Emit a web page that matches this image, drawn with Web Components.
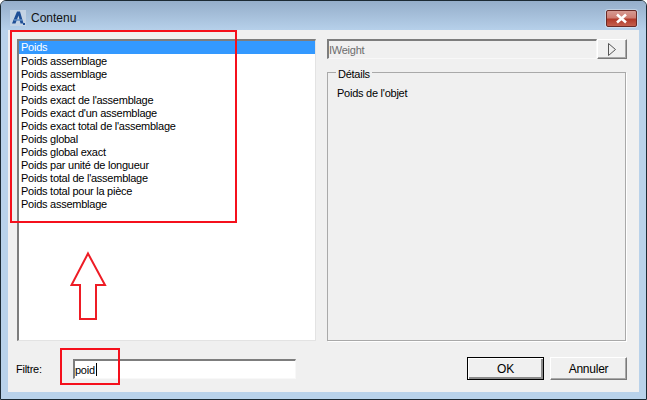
<!DOCTYPE html>
<html>
<head>
<meta charset="utf-8">
<title>Contenu</title>
<style>
  html, body { margin: 0; padding: 0; background: #fff; width: 647px; height: 400px; overflow: hidden; }
  body { font: 11px "Liberation Sans", Arial, sans-serif; letter-spacing: -.25px; color: #000; }
</style>
</head>
<body>
<win-dialog heading="Contenu">
  <dialog-body></dialog-body>
</win-dialog>
<script>
class WinDialog extends HTMLElement {
    constructor() {
        super();
        this.attachShadow({ mode: 'open' });
    }

    connectedCallback() {
        const heading = this.getAttribute('heading') || '';
        this.shadowRoot.innerHTML = `
      <style>
        :host {
          display: flex;
          flex-direction: column;
          box-sizing: border-box;
          width: 647px;
          height: 400px;
          border: 1px solid #1c2a33;
          border-radius: 6px 6px 0 0;
          background: #b9d2ea;
          overflow: hidden;
        }
        .bar {
          display: flex;
          align-items: center;
          height: 29px;
          flex: none;
          box-sizing: border-box;
          padding: 8px 9px 3px 9px;
          gap: 5px;
          background: linear-gradient(#95aeca, #b6d0ea);
        }
        .logo { width: 16px; height: 16px; flex: none; }
        .title { flex: 1; font-size: 12px; letter-spacing: 0; color: #111; }
        .close {
          box-sizing: border-box;
          width: 31px;
          height: 17px;
          border: 1px solid #6b2a26;
          border-radius: 2px;
          box-shadow: 0 0 0 1px rgba(255,255,255,.35);
          background: linear-gradient(#d69a92 0, #cf7d72 45%, #b13a2a 55%, #c4604e 100%);
          display: flex;
          align-items: center;
          justify-content: center;
        }
        .client { flex: 1; margin: 0 7px 7px 7px; background: #f0f0f0; display: flex; min-height: 0; }
      </style>
      <div class="bar">
        <svg class="logo" viewBox="0 0 16 16">
          <rect width="16" height="16" fill="#c4d3e4"/>
          <path d="M2 13.5 L7 1.5 H10 L13.5 13.5 H10.5 L8.5 5.5 L5.5 13.5 Z" fill="#1f4f96"/>
          <path d="M4 10 H12" stroke="#5f8cc4" stroke-width="1.5"/>
          <rect x="13" y="13" width="2" height="2" fill="#1f4f96"/>
        </svg>
        <span class="title">${heading}</span>
        <span class="close">
          <svg width="15" height="11" viewBox="0 0 15 11">
            <path d="M3 1.5 L12 9.5 M12 1.5 L3 9.5" stroke="#fff" stroke-width="2.6"/>
          </svg>
        </span>
      </div>
      <div class="client"><slot></slot></div>
    `;
    }
}

class ListPanel extends HTMLElement {
    constructor() {
        super();
        this.attachShadow({ mode: 'open' });
    }

    connectedCallback() {
        const rows = [
            'Poids', 'Poids assemblage', 'Poids assemblage', 'Poids exact',
            "Poids exact de l'assemblage", "Poids exact d'un assemblage",
            "Poids exact total de l'assemblage", 'Poids global', 'Poids global exact',
            'Poids par unité de longueur', "Poids total de l'assemblage",
            'Poids total pour la pièce', 'Poids assemblage'
        ];
        this.shadowRoot.innerHTML = `
      <style>
        :host {
          display: block;
          box-sizing: border-box;
          width: 299px;
          height: 302px;
          margin: -1px 0 0 -1px;
          background: #fff;
          border: 1px solid #e3e3e3;
          border-width: 2px 1px 1px 2px;
          border-color: #7d7d7d #e3e3e3 #e3e3e3 #7d7d7d;
        }
        div { height: 13px; line-height: 13px; padding-left: 2px; white-space: nowrap; color: #000; }
        .sel { background: #3399ff; color: #fff; margin-bottom: 1px; }
      </style>
      ${rows.map((r, i) => `<div class="${i === 0 ? 'sel' : ''}">${r}</div>`).join('')}
    `;
    }
}

class SunkenField extends HTMLElement {
    constructor() {
        super();
        this.attachShadow({ mode: 'open' });
    }

    connectedCallback() {
        this.shadowRoot.innerHTML = `
      <style>
        :host {
          display: flex;
          align-items: center;
          box-sizing: border-box;
          border: 2px solid;
          border-color: #7d7d7d #f8f8f8 #f8f8f8 #7d7d7d;
          border-right-width: 1px;
          border-bottom-width: 1px;
          white-space: nowrap;
        }
      </style>
      <slot></slot>
    `;
    }
}

class PushButton extends HTMLElement {
    constructor() {
        super();
        this.attachShadow({ mode: 'open' });
    }

    connectedCallback() {
        const isDefault = this.hasAttribute('default');
        this.shadowRoot.innerHTML = `
      <style>
        :host {
          display: flex;
          align-items: center;
          justify-content: center;
          box-sizing: border-box;
          background: #f0f0f0;
          font-size: 12px;
          color: #000;
          border: 1px solid;
          border-color: #fff #7a7a7a #7a7a7a #fff;
          box-shadow: inset -1px -1px 0 #a8a8a8;
          ${isDefault ? 'border-color: #000; box-shadow: inset 1px 1px 0 #fff, inset -2px -2px 0 #8a8a8a;' : ''}
        }
      </style>
      <slot></slot>
    `;
    }
}

class DialogBody extends HTMLElement {
    constructor() {
        super();
        this.attachShadow({ mode: 'open' });
    }

    connectedCallback() {
        this.shadowRoot.innerHTML = `
      <style>
        :host {
          display: block;
          position: relative;
          width: 631px;
          height: 362px;
          box-sizing: border-box;
          padding: 10px 13px 0 10px;
        }
        .top { display: flex; gap: 11px; height: 301px; }
        .right { flex: 1; display: flex; flex-direction: column; gap: 5px; }
        .path { display: flex; height: 20px; margin-top: -1px; }
        sunken-field.name { flex: 1; color: #6d6d6d; }
        .path push-button { width: 30px; margin-right: -1px; }
        fieldset {
          flex: 1;
          margin: 0;
          padding: 6px 9px;
          border: 1px solid #a9a9a9;
          box-shadow: 1px 1px 0 #fff;
          min-height: 0;
        }
        legend { padding: 4px 2px 0; margin-left: -1px; line-height: 13px; }
        .desc { line-height: 13px; }
        .bottom { display: flex; align-items: center; margin-top: 16px; height: 23px; }
        .lbl { width: 57px; margin-left: -2px; flex: none; }
        sunken-field.filter { width: 223px; height: 20px; background: #fff; color: #000; margin-top: 1px; }
        .caret { display: inline-block; width: 1px; height: 13px; background: #000; vertical-align: -2px; margin-left: 1px; }
        .actions { margin-left: auto; display: flex; gap: 6px; margin-right: -1px; }
        .actions push-button { width: 77px; height: 23px; }
        .mark { position: absolute; border: 2px solid #f5101c; box-sizing: border-box; pointer-events: none; }
        .mark.list { left: 2px; top: 0; width: 227px; height: 193px; }
        .mark.input { left: 52px; top: 318px; width: 60px; height: 37px; }
        .arrow { position: absolute; left: 62px; top: 221px; }
      </style>
      <div class="top">
        <list-panel></list-panel>
        <div class="right">
          <div class="path">
            <sunken-field class="name">IWeight</sunken-field>
            <push-button>
              <svg width="10" height="13" viewBox="0 0 10 13">
                <path d="M1.5 .5 V12.5 L8.5 6.5 Z" fill="none" stroke="#555"/>
              </svg>
            </push-button>
          </div>
          <fieldset>
            <legend>Détails</legend>
            <div class="desc">Poids de l'objet</div>
          </fieldset>
        </div>
      </div>
      <div class="bottom">
        <span class="lbl">Filtre:</span>
        <sunken-field class="filter"><span>poid<i class="caret"></i></span></sunken-field>
        <div class="actions">
          <push-button default>OK</push-button>
          <push-button>Annuler</push-button>
        </div>
      </div>
      <div class="mark list"></div>
      <div class="mark input"></div>
      <svg class="arrow" width="38" height="72" viewBox="0 0 38 72">
        <path d="M18 2.5 L35 34 H26 V68 H10 V34 H1.5 Z" fill="none" stroke="#ee1c25" stroke-width="2"/>
      </svg>
    `;
    }
}

customElements.define('win-dialog', WinDialog);
customElements.define('list-panel', ListPanel);
customElements.define('sunken-field', SunkenField);
customElements.define('push-button', PushButton);
customElements.define('dialog-body', DialogBody);
</script>
</body>
</html>
